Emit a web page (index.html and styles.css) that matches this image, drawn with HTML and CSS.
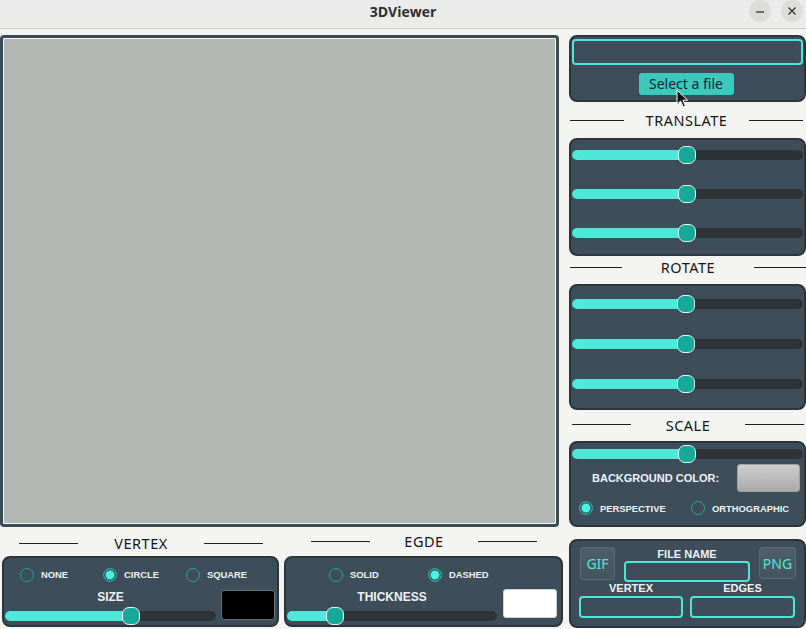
FILE: index.html
```html
<!DOCTYPE html>
<html>
<head>
<meta charset="utf-8">
<title>3DViewer</title>
<link rel="stylesheet" href="styles.css">
</head>
<body>
<div class="titlebar">
  <span class="title">3DViewer</span>
  <div class="winbtns">
    <span class="wbtn"><svg width="10" height="10" viewBox="0 0 10 10"><path d="M1 6h8" stroke="#333" stroke-width="1.3"/></svg></span>
    <span class="wbtn"><svg width="10" height="10" viewBox="0 0 10 10"><path d="M1.5 1.5l7 7M8.5 1.5l-7 7" stroke="#333" stroke-width="1.3"/></svg></span>
  </div>
</div>
<div class="main">
  <div class="leftcol">
    <div class="viewport"></div>
    <div class="bottomrow">
      <div class="group g-vertex">
        <div class="sect s-vertex"><span class="line"></span><span class="sect-text">VERTEX</span><span class="line"></span></div>
        <div class="panel vpanel">
          <div class="radios r-vertex">
            <label class="radio"><span class="dot"></span>NONE</label>
            <label class="radio"><span class="dot on"></span>CIRCLE</label>
            <label class="radio"><span class="dot"></span>SQUARE</label>
          </div>
          <div class="ctrlrow">
            <div class="ctrlcol c-vertex">
              <div class="ctrl-label">SIZE</div>
              <div class="slider"><div class="fill" style="width:59.5%"><span class="thumb"></span></div></div>
            </div>
            <div class="swatch black"></div>
          </div>
        </div>
      </div>
      <div class="group g-edge">
        <div class="sect s-edge"><span class="line"></span><span class="sect-text">EGDE</span><span class="line"></span></div>
        <div class="panel epanel">
          <div class="radios r-edge">
            <label class="radio"><span class="dot"></span>SOLID</label>
            <label class="radio"><span class="dot on"></span>DASHED</label>
          </div>
          <div class="ctrlrow">
            <div class="ctrlcol c-edge">
              <div class="ctrl-label">THICKNESS</div>
              <div class="slider"><div class="fill" style="width:23%"><span class="thumb"></span></div></div>
            </div>
            <div class="swatch white"></div>
          </div>
        </div>
      </div>
    </div>
  </div>
  <div class="rightcol">
    <div class="panel filepanel">
      <div class="input wide"></div>
      <button class="selbtn">Select a file</button>
    </div>
    <div class="sect s-translate"><span class="line"></span><span class="sect-text">TRANSLATE</span><span class="line"></span></div>
    <div class="panel sliders s3-translate">
      <div class="slider"><div class="fill" style="width:49.6%"><span class="thumb"></span></div></div>
      <div class="slider"><div class="fill" style="width:49.6%"><span class="thumb"></span></div></div>
      <div class="slider"><div class="fill" style="width:49.6%"><span class="thumb"></span></div></div>
    </div>
    <div class="sect s-rotate"><span class="line"></span><span class="sect-text">ROTATE</span><span class="line"></span></div>
    <div class="panel sliders s3-rotate">
      <div class="slider"><div class="fill" style="width:49.2%"><span class="thumb"></span></div></div>
      <div class="slider"><div class="fill" style="width:49.2%"><span class="thumb"></span></div></div>
      <div class="slider"><div class="fill" style="width:49.2%"><span class="thumb"></span></div></div>
    </div>
    <div class="sect s-scale"><span class="line"></span><span class="sect-text">SCALE</span><span class="line"></span></div>
    <div class="panel scalepanel">
      <div class="slider"><div class="fill" style="width:49.8%"><span class="thumb"></span></div></div>
      <div class="bgrow">
        <span class="bold-label">BACKGROUND COLOR:</span>
        <div class="swatch gray"></div>
      </div>
      <div class="radios r-proj">
        <label class="radio"><span class="dot on"></span>PERSPECTIVE</label>
        <label class="radio"><span class="dot"></span>ORTHOGRAPHIC</label>
      </div>
    </div>
    <div class="panel exportpanel">
      <div class="exrow1">
        <button class="fmtbtn gif">GIF</button>
        <div class="fieldcol fname">
          <span class="field-label">FILE NAME</span>
          <div class="input"></div>
        </div>
        <button class="fmtbtn png">PNG</button>
      </div>
      <div class="exrow2">
        <div class="fieldcol">
          <span class="field-label">VERTEX</span>
          <div class="input"></div>
        </div>
        <div class="fieldcol">
          <span class="field-label">EDGES</span>
          <div class="input"></div>
        </div>
      </div>
    </div>
  </div>
</div>
<svg class="cursor" width="14" height="20" viewBox="0 0 14 20"><path d="M1 1 L1 15.5 L4.6 12 L7.2 18 L9.4 17 L6.9 11.2 L11.6 11.2 Z" fill="#111" stroke="#fff" stroke-width="1" stroke-linejoin="round"/></svg>
</body>
</html>
```

FILE: styles.css
```css
* { box-sizing: border-box; }
html, body { margin: 0; padding: 0; }
body {
  width: 806px;
  height: 629px;
  overflow: hidden;
  background: #f4f4f2;
  font-family: "Noto Sans", "DejaVu Sans", sans-serif;
  color: #1c1c1c;
  position: relative;
}

/* title bar */
.titlebar {
  height: 29px;
  background: #ebebeb;
  border-bottom: 1px solid #c9c9c7;
  position: relative;
  display: flex;
  align-items: center;
  justify-content: center;
}
.title {
  font-family: "Open Sans", "Noto Sans", sans-serif;
  font-weight: 700;
  font-size: 14px;
  color: #2e2e2e;
  margin-top: -6px;
}
.winbtns {
  position: absolute;
  right: 3px;
  top: 0;
  height: 23px;
  display: flex;
  gap: 10px;
}
.wbtn {
  width: 22px;
  height: 22px;
  border-radius: 50%;
  background: #dcdcdb;
  display: flex;
  align-items: center;
  justify-content: center;
}

/* main */
.main {
  display: flex;
  padding-top: 6px;
  gap: 5px;
}
.leftcol {
  width: 564px;
  display: flex;
  flex-direction: column;
}
.viewport {
  width: 559px;
  height: 492px;
  background: #b3b8b5;
  border: 3px solid #3a4b57;
  border-radius: 4px;
  box-shadow: inset 0 0 0 1px #f4f6f6;
}
.bottomrow {
  display: flex;
  gap: 5px;
  padding-left: 2px;
}
.group { display: flex; flex-direction: column; }
.g-vertex { width: 277px; }
.g-edge { width: 279px; }

/* section labels */
.sect {
  display: flex;
  align-items: center;
  justify-content: space-between;
  font-size: 14.5px;
  letter-spacing: 0.5px;
  color: #161616;
}
.sect .line {
  display: block;
  height: 1px;
  background: #1e1e1e;
}
.s-vertex { height: 29px; padding: 3px 16px 0 17px; }
.s-vertex .line, .s-edge .line { width: 59px; }
.s-edge { height: 29px; padding: 0 26px 1px 27px; }
.s-translate { height: 36px; padding: 0 3px 0 1px; }
.s-translate .line { width: 54px; }
.s-rotate { height: 28px; padding: 0 0 6px 1px; }
.s-rotate .line { width: 52px; }
.s-scale { height: 31px; padding: 0 2px 2px 3px; }
.s-scale .line { width: 59px; }

/* panels */
.panel {
  background: #3d4d59;
  border: 2px solid #2c353c;
  border-radius: 8px;
}

/* radios */
.radios { display: flex; align-items: center; }
.radio {
  display: flex;
  align-items: center;
  gap: 7px;
  font-family: "Liberation Sans", Arial, sans-serif;
  font-weight: 700;
  font-size: 9.4px;
  color: #eef2f4;
}
.dot {
  width: 14px;
  height: 14px;
  border-radius: 50%;
  border: 1px solid #1ba898;
  flex: none;
}
.dot.on {
  background: #4bf0e0;
  box-shadow: inset 0 0 0 1.5px #3d4d59;
}

/* sliders */
.slider {
  height: 10px;
  border-radius: 5px;
  background: #2d3337;
}
.fill {
  height: 10px;
  background: #4de8d8;
  border-radius: 5px 0 0 5px;
  position: relative;
}
.thumb {
  position: absolute;
  right: -9px;
  top: -4px;
  width: 18px;
  height: 18px;
  border-radius: 7px;
  background: #16a999;
  border: 1px solid #e4f4f2;
}

/* vertex / edge panels */
.vpanel, .epanel {
  height: 71px;
  display: flex;
  flex-direction: column;
}
.r-vertex {
  height: 31px;
  padding-left: 16px;
  padding-top: 2px;
}
.r-vertex .radio { width: 83px; }
.r-edge {
  height: 31px;
  padding-left: 43px;
  padding-top: 2px;
}
.r-edge .radio { width: 99px; }
.ctrlrow {
  display: flex;
  align-items: flex-start;
}
.ctrlcol { display: flex; flex-direction: column; }
.c-vertex { width: 211px; margin-left: 1px; }
.c-edge { width: 210px; margin-left: 1px; }
.ctrl-label {
  text-align: center;
  font-family: "Liberation Sans", Arial, sans-serif;
  font-weight: 700;
  font-size: 12px;
  color: #eef2f4;
  height: 18px;
  line-height: 16px;
  margin-bottom: 4px;
}
.swatch {
  border: 1px solid #8a949a;
  border-radius: 3px;
}
.swatch.black {
  width: 54px;
  height: 30px;
  margin-left: 5px;
  margin-top: 1px;
  background: #000;
  border-color: #6d7278;
}
.swatch.white {
  width: 54px;
  height: 29px;
  margin-left: 6px;
  background: #fff;
  border-color: #cfd3d5;
}

/* right column */
.rightcol {
  width: 237px;
  display: flex;
  flex-direction: column;
}
.filepanel {
  height: 67px;
  display: flex;
  flex-direction: column;
  align-items: center;
  padding: 2px 1px 0;
}
.input {
  border: 2px solid #4ee6d6;
  border-radius: 4px;
  height: 21px;
}
.input.wide {
  width: 231px;
  height: 26px;
}
.selbtn {
  margin-top: 8px;
  margin-right: 3px;
  width: 95px;
  height: 22px;
  border: none;
  border-radius: 3px;
  background: #3cc9bd;
  color: #1b262c;
  font-family: "Noto Sans", "Open Sans", sans-serif;
  font-size: 14px;
  padding: 0;
  line-height: 20px;
}
.sliders {
  display: flex;
  flex-direction: column;
  padding: 10px 1px 0;
}
.s3-translate { height: 118px; gap: 29px; }
.s3-rotate { height: 126px; gap: 30px; padding-top: 13px; }
.scalepanel {
  height: 86px;
  padding: 6px 1px 0;
  display: flex;
  flex-direction: column;
}
.bgrow {
  display: flex;
  align-items: center;
  justify-content: space-between;
  padding: 5px 3px 0 20px;
}
.bold-label {
  font-family: "Liberation Sans", Arial, sans-serif;
  font-weight: 700;
  font-size: 11px;
  color: #eef2f4;
}
.swatch.gray {
  width: 63px;
  height: 28px;
  background: linear-gradient(#cfcfcf, #a9a9a9);
  border-color: #9ba2a6;
}
.r-proj {
  padding: 9px 0 0 7px;
}
.r-proj .radio { width: 116px; }
.exportpanel {
  margin-top: 12px;
  height: 89px;
  padding: 6px 0 0;
  display: flex;
  flex-direction: column;
}
.exrow1 {
  display: flex;
  align-items: flex-start;
  gap: 9px;
  padding-left: 9px;
}
.fmtbtn {
  height: 33px;
  border: 1px solid #5b6b75;
  border-radius: 3px;
  background: linear-gradient(#4f5f6a, #45555f);
  color: #4ee6d6;
  font-family: "Noto Sans", "Open Sans", sans-serif;
  font-size: 14px;
  padding: 0;
}
.fmtbtn.gif { width: 35px; }
.fmtbtn.png { width: 37px; height: 32px; }
.fieldcol { display: flex; flex-direction: column; align-items: center; }
.fname { width: 126px; }
.fname .input { width: 126px; }
.field-label {
  font-family: "Liberation Sans", Arial, sans-serif;
  font-weight: 700;
  font-size: 11px;
  color: #eef2f4;
  height: 14px;
  line-height: 14px;
}
.exrow2 {
  display: flex;
  gap: 7px;
  padding-left: 8px;
  margin-top: -1px;
}
.exrow2 .fieldcol { width: 104px; }
.exrow2 .fieldcol:last-child { width: 105px; }
.exrow2 .input { width: 100%; height: 22px; margin-top: 1px; }

.cursor {
  position: absolute;
  left: 676px;
  top: 89px;
}
```
